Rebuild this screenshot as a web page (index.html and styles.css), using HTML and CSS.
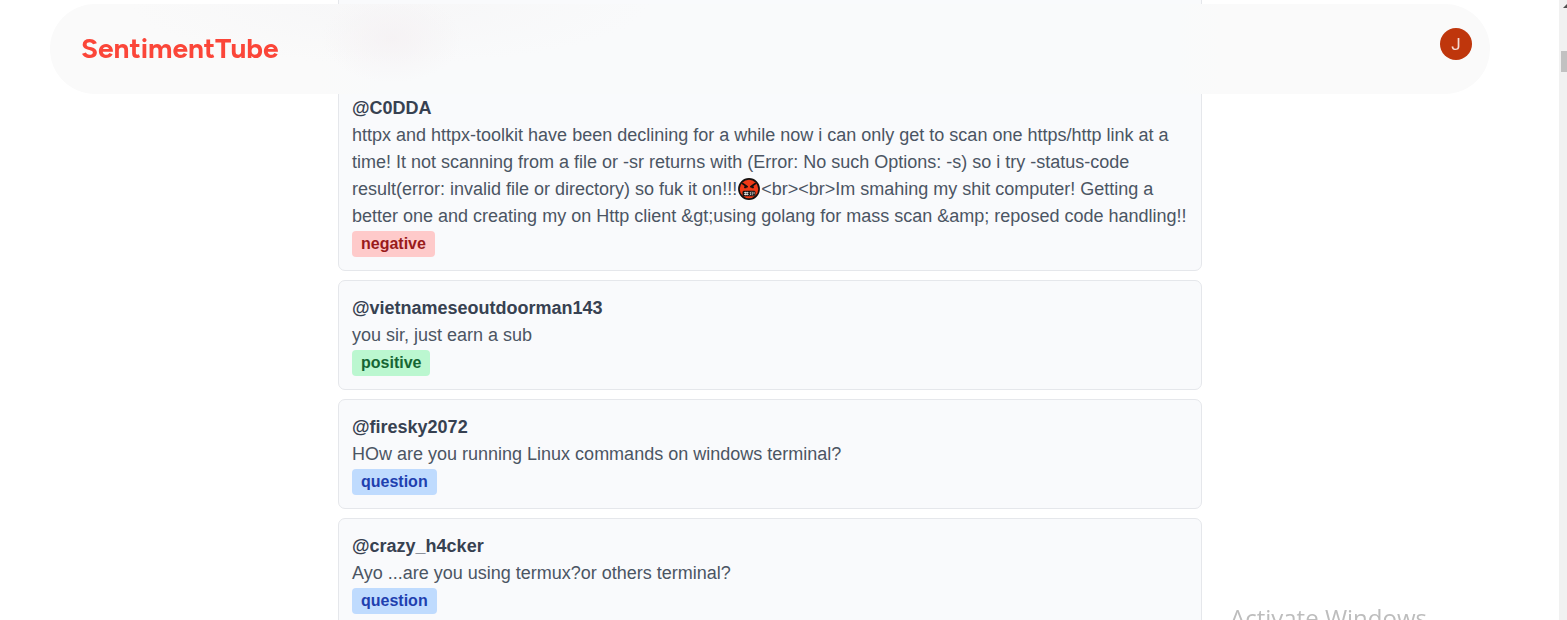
FILE: index.html
```html
<!DOCTYPE html>
<html lang="en">
<head>
<meta charset="utf-8">
<title>SentimentTube</title>
<link rel="stylesheet" href="styles.css">
</head>
<body>
<header class="navbar">
  <a class="brand" href="#">SentimentTube</a>
  <button class="avatar" type="button" aria-label="Account">J</button>
</header>
<main class="page">
  <div class="comments">
    <div class="comment comment-tail"></div>
    <article class="comment">
      <h2 class="author">@C0DDA</h2>
      <p class="text">httpx and httpx-toolkit have been declining for a while now i can only get to scan one https/http link at a time! It not scanning from a file or -sr returns with (Error: No such Options: -s) so i try -status-code result(error: invalid file or directory) so fuk it on!!!<svg class="emoji" viewBox="0 0 24 24" aria-hidden="true"><circle cx="12" cy="12" r="11" fill="#f03a17" stroke="#15100f" stroke-width="1.8"/><path d="M5 6l5 3.5M19 6l-5 3.500" stroke="#15100f" stroke-width="1.800" stroke-linecap="round"/><circle cx="8" cy="10" r="1.300" fill="#15100f"/><circle cx="16" cy="10" r="1.300" fill="#15100f"/><rect x="5" y="14" width="14" height="6" rx="1.500" fill="#15100f"/><path d="M8 15v4M10 15v4M6.500 16h5M6.500 18h5M14 15l-1 1.500 1 1-1 1.500M15.500 15v4M17.500 15v2.500M17.500 18.300v.7" fill="none" stroke="#fff" stroke-width=".8"/></svg>&lt;br&gt;&lt;br&gt;Im smahing my shit computer! Getting a better one and creating my on Http client &amp;gt;using golang for mass scan &amp;amp; reposed code handling!!</p>
      <span class="badge negative">negative</span>
    </article>
    <article class="comment">
      <h2 class="author">@vietnameseoutdoorman143</h2>
      <p class="text">you sir, just earn a sub</p>
      <span class="badge positive">positive</span>
    </article>
    <article class="comment">
      <h2 class="author">@firesky2072</h2>
      <p class="text">HOw are you running Linux commands on windows terminal?</p>
      <span class="badge question">question</span>
    </article>
    <article class="comment">
      <h2 class="author">@crazy_h4cker</h2>
      <p class="text">Ayo ...are you using termux?or others terminal?</p>
      <span class="badge question">question</span>
    </article>
  </div>
</main>
<div class="watermark">Activate Windows</div>
<div class="scrollbar"><svg class="arrow" viewBox="0 0 8 8"><path d="M4 8L8 4V8z" fill="#505050"/></svg><div class="thumb"></div></div>
</body>
</html>
```
FILE: styles.css
```css
* { box-sizing: border-box; }
body {
  margin: 0;
  height: 100vh;
  overflow: hidden;
  padding-right: 27px;
  background: #fff;
  font: 18px/27px "Liberation Sans", Arial, sans-serif;
}
.navbar {
  position: fixed;
  z-index: 2;
  top: 4px;
  left: 50px;
  right: 77px;
  height: 90px;
  padding: 0 18px 2px 31px;
  border-radius: 45px;
  display: flex;
  align-items: center;
  justify-content: space-between;
  background:
    radial-gradient(ellipse 70px 45px at 342px 34px, rgba(245, 241, 243, .8), rgba(249, 249, 250, 0)),
    radial-gradient(ellipse 260px 60px at 340px 0, rgba(247, 247, 248, .8) 30%, rgba(249, 249, 250, 0)),
    linear-gradient(90deg, #fafafa 270px, #f9fafb 330px, #f9fafb calc(100% - 310px), #fafafa calc(100% - 270px));
}
.brand {
  color: #fb4639;
  font: 700 28px/36px Figtree, Lato, sans-serif;
  text-decoration: none;
}
.avatar {
  width: 32px;
  height: 32px;
  margin-bottom: 8px;
  padding: 0;
  border: 0;
  border-radius: 50%;
  background: #bf360c;
  color: #f6ddd6;
  font: 17px/32px Roboto, sans-serif;
}
.page { padding: 0 50px; }
.comments {
  max-width: 864px;
  margin: 0 auto;
  display: flex;
  flex-direction: column;
  gap: 9px;
}
.comment {
  padding: 14px 13px 13px;
  border: 1px solid #e5e7eb;
  border-radius: 7px;
  background: #f9fafc;
}
.comment-tail {
  height: 71px;
  border-top: 0;
  border-radius: 0 0 7px 7px;
}
.author, .text { margin: 0; font-size: 18px; }
.author { color: #374151; font-weight: 700; }
.text { color: #4b5563; }
.emoji {
  width: 22px;
  height: 22px;
  margin: 0 1px;
  vertical-align: -5px;
}
.badge {
  display: block;
  width: fit-content;
  padding: 0 9px;
  margin-top: 1px;
  border-radius: 4px;
  font-size: 16px;
  font-weight: 700;
  line-height: 26px;
}
.negative { background: #fecaca; color: #991b1b; }
.positive { background: #bbf7d0; color: #166534; }
.question { background: #bfdbfe; color: #1e40af; }
.watermark {
  position: fixed;
  left: 1230px;
  top: 602px;
  color: #bdbdbd;
  font: 24px/32px "Open Sans", sans-serif;
  white-space: nowrap;
}
.scrollbar {
  position: fixed;
  top: 0;
  right: 0;
  bottom: 0;
  width: 8px;
  background: #f1f1f1;
}
.arrow { display: block; width: 8px; height: 8px; }
.thumb { height: 21px; margin: 43px 0 0 2px; background: #c1c1c1; }
```
